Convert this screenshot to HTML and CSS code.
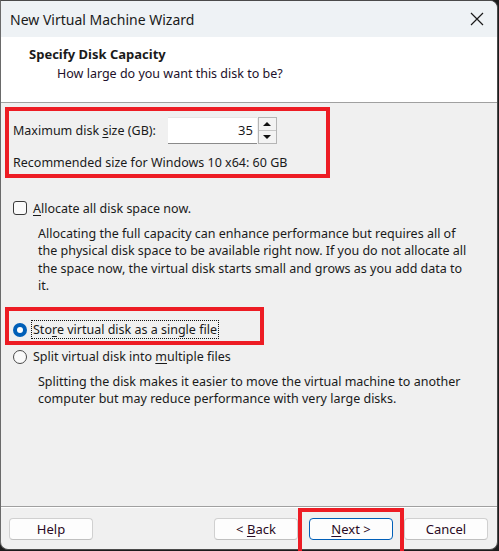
FILE: index.html
```html
<!DOCTYPE html>
<html lang="en">
<head>
    <meta charset="UTF-8">
    <title>New Virtual Machine Wizard</title>
    <link rel="stylesheet" href="styles.css">
</head>
<body>

    <div class="window">
        <div class="titlebar">
            <span class="title">New Virtual Machine Wizard</span>
            <svg class="close" width="14" height="14" viewBox="0 0 14 14">
                <path d="M1 1 L13 13 M13 1 L1 13" stroke="#1a1a1a" stroke-width="1.2" fill="none"/>
            </svg>
        </div>

        <div class="header">
            <h1>Specify Disk Capacity</h1>
            <p>How large do you want this disk to be?</p>
        </div>

        <div class="content">
            <div class="mark size-box">
                <div class="size-row">
                    <span>Maximum disk <u>s</u>ize (GB):</span>
                    <div class="spin">
                        <div class="spin-input">35</div>
                        <div class="spin-btns">
                            <div class="spin-btn"><span class="tri-up"></span></div>
                            <div class="spin-btn"><span class="tri-down"></span></div>
                        </div>
                    </div>
                </div>
                <p class="recommend">Recommended size for Windows 10 x64: 60 GB</p>
            </div>

            <div class="option check-row">
                <span class="checkbox"></span>
                <span><u>A</u>llocate all disk space now.</span>
            </div>
            <p class="desc">Allocating the full capacity can enhance performance but requires all of the physical disk space to be available right now. If you do not allocate all the space now, the virtual disk starts small and grows as you add data to it.</p>

            <div class="mark radio-box">
                <div class="option">
                    <span class="radio checked"></span>
                    <span class="focus">Sto<u>r</u>e virtual disk as a single file</span>
                </div>
            </div>
            <div class="option split-row">
                <span class="radio"></span>
                <span>Split virtual disk into <u>m</u>ultiple files</span>
            </div>
            <p class="desc desc-split">Splitting the disk makes it easier to move the virtual machine to another computer but may reduce performance with very large disks.</p>
        </div>

        <div class="footer">
            <div class="btn">Help</div>
            <div class="spacer"></div>
            <div class="btn">&lt; <u>B</u>ack</div>
            <div class="btn primary"><u>N</u>ext &gt;</div>
            <div class="btn">Cancel</div>
        </div>
    </div>

    <!-- Markierung um den Weiter-Knopf -->
    <div class="mark-next"></div>

</body>
</html>
```

FILE: styles.css
```css
body {
    margin: 0;
    background-color: #1c1c1c;
    font-family: "Noto Sans", "Open Sans", sans-serif;
    font-size: 12.5px;
    color: #1a1a1a;
    width: 499px;
    height: 551px;
    overflow: hidden;
    position: relative;
}
u {
    text-decoration-thickness: 1px;
    text-underline-offset: 2px;
}
.window {
    width: 496px;
    height: 548px;
    border: 1px solid #4a4a4a;
    border-left-color: #6a6a6a;
    border-radius: 0 8px 8px 8px;
    overflow: hidden;
    background-color: #f0f0f0;
    display: flex;
    flex-direction: column;
}
.titlebar {
    height: 36px;
    flex-shrink: 0;
    background-color: #eef2f5;
    display: flex;
    align-items: center;
    justify-content: space-between;
    padding: 0 13px 0 9px;
}
.title {
    font-size: 14px;
    color: #1a1a1a;
}
.header {
    height: 65px;
    flex-shrink: 0;
    background-color: #fff;
    border-bottom: 1px solid #a0a0a0;
    padding: 0 0 0 28px;
}
.header h1 {
    font-size: 13px;
    font-weight: bold;
    margin: 7px 0 0 0;
    line-height: 20px;
}
.header p {
    margin: 0 0 0 28px;
    line-height: 20px;
    color: #22102a;
}
.content {
    flex: 1;
    padding: 4px 0 0 4px;
    border-bottom: 1px solid #a0a0a0;
}
.mark {
    border: 4px solid #ed1c24;
}
.size-box {
    width: 313px;
    height: 57px;
    padding: 6px 0 0 4px;
}
.size-row {
    display: flex;
    align-items: center;
    gap: 12px;
    height: 27px;
}
.spin {
    display: flex;
}
.spin-input {
    width: 85px;
    height: 25px;
    background-color: #fff;
    border-top: 1px solid #e5e5e5;
    border-bottom: 1px solid #8a8a8a;
    text-align: right;
    padding-right: 4px;
    line-height: 25px;
    font-size: 13px;
}
.spin-btns {
    display: flex;
    flex-direction: column;
    border: 1px solid #b5b5b5;
    height: 25px;
    margin-left: 1px;
}
.spin-btn {
    width: 17px;
    height: 12px;
    background-color: #f3f3f3;
    display: flex;
    align-items: center;
    justify-content: center;
}
.spin-btn + .spin-btn {
    border-top: 1px solid #c8c8c8;
}
.tri-up {
    border-left: 4px solid transparent;
    border-right: 4px solid transparent;
    border-bottom: 4px solid #111;
}
.tri-down {
    border-left: 4px solid transparent;
    border-right: 4px solid transparent;
    border-top: 4px solid #111;
}
.recommend {
    margin: 10px 0 0 0;
    line-height: 18px;
}
.option {
    display: flex;
    align-items: center;
    gap: 6px;
    height: 19px;
}
.check-row {
    margin: 20.5px 0 0 8px;
}
.checkbox {
    width: 12px;
    height: 12px;
    border: 1px solid #3a3a3a;
    border-radius: 3px;
    background-color: #fafafa;
}
.desc {
    margin: 7px 0 0 33px;
    line-height: 17.5px;
    width: 430px;
}
.desc-split {
    line-height: 17px;
}
.radio-box {
    width: 247px;
    height: 21px;
    margin-top: 12.5px;
    padding: 9px 0 0 4px;
}
.radio {
    width: 12px;
    height: 12px;
    border: 1px solid #4a4a4a;
    border-radius: 50%;
    background-color: #fafafa;
    position: relative;
}
.radio.checked {
    width: 14px;
    height: 14px;
    border: none;
    background-color: #005fb8;
}
.radio.checked::after {
    content: "";
    position: absolute;
    left: 4px;
    top: 4px;
    width: 6px;
    height: 6px;
    border-radius: 50%;
    background-color: #fff;
}
.focus {
    outline: 1px dotted #111;
    padding: 0 1px;
    margin-left: -1px;
    line-height: 17px;
}
.split-row {
    margin: 2px 0 0 8px;
}
.footer {
    height: 42px;
    box-sizing: border-box;
    flex-shrink: 0;
    border-top: 1px solid #fff;
    display: flex;
    align-items: flex-start;
    gap: 11px;
    padding: 10px 9px 0 8px;
}
.spacer {
    flex: 1;
}
.btn {
    width: 82px;
    height: 20px;
    border: 1px solid #d0d0d0;
    border-bottom-color: #c0c0c0;
    border-radius: 4px;
    background-color: #fdfdfd;
    text-align: center;
    line-height: 20px;
    font-size: 13px;
    color: #2a0a24;
}
.btn.primary {
    border-color: #005fb8;
}
.mark-next {
    position: absolute;
    left: 298px;
    top: 508px;
    width: 98px;
    height: 45px;
    border: 4px solid #ed1c24;
}
```
